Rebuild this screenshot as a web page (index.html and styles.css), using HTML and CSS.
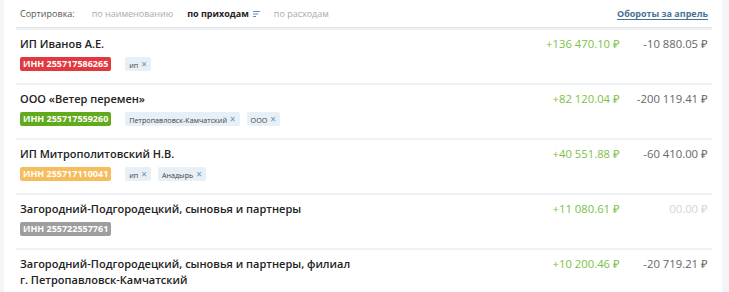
FILE: index.html
```html
<!DOCTYPE html>
<html lang="ru">
<head>
    <meta charset="UTF-8">
    <title>Обороты</title>
    <link rel="stylesheet" href="styles.css">
</head>
<body>
    <div class="panel">
        <div class="toolbar">
            <span class="sort-label">Сортировка:</span>
            <a href="#" class="sort">по наименованию</a>
            <a href="#" class="sort active">по приходам<svg class="sort-icon" viewBox="0 0 8 7"><path d="M0 0.5h8M0 3.5h6M0 6.5h3.5"/></svg></a>
            <a href="#" class="sort">по расходам</a>
            <a href="#" class="period">Обороты за апрель</a>
        </div>

        <div class="row">
            <div class="info">
                <div class="name">ИП Иванов А.Е.</div>
                <div class="tags">
                    <span class="inn red">ИНН 255717586265</span>
                    <span class="tag">ип <span class="x">&times;</span></span>
                </div>
            </div>
            <div class="income">+136 470.10 ₽</div>
            <div class="expense">-10 880.05 ₽</div>
        </div>

        <div class="row">
            <div class="info">
                <div class="name">ООО «Ветер перемен»</div>
                <div class="tags">
                    <span class="inn green">ИНН 255717559260</span>
                    <span class="tag">Петропавловск-Камчатский <span class="x">&times;</span></span>
                    <span class="tag">ООО <span class="x">&times;</span></span>
                </div>
            </div>
            <div class="income">+82 120.04 ₽</div>
            <div class="expense">-200 119.41 ₽</div>
        </div>

        <div class="row">
            <div class="info">
                <div class="name">ИП Митрополитовский Н.В.</div>
                <div class="tags">
                    <span class="inn orange">ИНН 255717110041</span>
                    <span class="tag">ип <span class="x">&times;</span></span>
                    <span class="tag">Анадырь <span class="x">&times;</span></span>
                </div>
            </div>
            <div class="income">+40 551.88 ₽</div>
            <div class="expense">-60 410.00 ₽</div>
        </div>

        <div class="row">
            <div class="info">
                <div class="name">Загородний-Подгородецкий, сыновья и партнеры</div>
                <div class="tags">
                    <span class="inn gray">ИНН 255722557761</span>
                </div>
            </div>
            <div class="income">+11 080.61 ₽</div>
            <div class="expense zero">00.00 ₽</div>
        </div>

        <div class="row">
            <div class="info">
                <div class="name">Загородний-Подгородецкий, сыновья и партнеры, филиал г. Петропавловск-Камчатский</div>
                <div class="tags">
                    <span class="inn green">ИНН 255717559260</span>
                    <span class="tag">Петропавловск-Камчатский <span class="x">&times;</span></span>
                </div>
            </div>
            <div class="income">+10 200.46 ₽</div>
            <div class="expense">-20 719.21 ₽</div>
        </div>
    </div>
</body>
</html>
```

FILE: styles.css
```css
body {
    margin: 0;
    padding: 0 7px 0 4px;
    background: #f3f5f8;
    font-family: "Open Sans", sans-serif;
    color: #333;
    height: 292px;
    overflow: hidden;
}

.panel {
    background: white;
    padding: 0 10px 0 12px;
    min-height: 100%;
}

.toolbar {
    display: flex;
    align-items: center;
    height: 27px;
    padding: 0 4px;
    border-bottom: 1px solid #e4e6e8;
    font-size: 9px;
}

.sort-label {
    color: #555;
    margin-right: 17px;
}

.sort {
    color: #aaa;
    text-decoration: none;
    margin-right: 14px;
}

.sort.active {
    color: #222;
    font-weight: 700;
    display: flex;
    align-items: center;
}

.sort-icon {
    width: 7px;
    height: 6px;
    margin-left: 4px;
    stroke: #5f8bb8;
    stroke-width: 1.2;
}

.period {
    margin-left: auto;
    color: #4a7196;
    font-weight: 700;
    font-size: 9px;
    text-decoration: underline;
    text-underline-offset: 2px;
}

.row {
    display: flex;
    align-items: flex-start;
    padding: 6px 4px 12px;
    border-top: 2px solid #eef2f7;
}

.row:first-of-type {
    border-top: none;
}

.info {
    flex: 1;
}

.name {
    font-size: 11px;
    font-weight: 600;
    line-height: 16px;
    color: #222;
    max-width: 340px;
}

.tags {
    display: flex;
    align-items: center;
    margin-top: 5px;
}

.inn {
    display: inline-block;
    height: 14px;
    line-height: 14px;
    padding: 0 3px;
    border-radius: 2px;
    color: white;
    font-size: 9px;
    font-weight: 700;
    margin-right: 14px;
}

.inn.red { background: #e2383f; }
.inn.green { background: #61aa1c; }
.inn.orange { background: #f5bd5c; }
.inn.gray { background: #9e9e9e; }

.tag {
    display: inline-block;
    height: 14px;
    line-height: 14px;
    padding: 0 4px;
    margin-right: 7px;
    background: #e7eff7;
    color: #444;
    font-size: 7.2px;
    border-radius: 2px;
}

.tag .x {
    color: #6b8fb3;
    font-size: 10px;
    margin-left: 1px;
}

.income,
.expense {
    font-size: 11.3px;
    line-height: 16px;
    text-align: right;
}

.income {
    color: #7bbf45;
    width: 120px;
}

.expense {
    color: #666;
    width: 88px;
}

.expense.zero {
    color: #d4d4d4;
}
```
